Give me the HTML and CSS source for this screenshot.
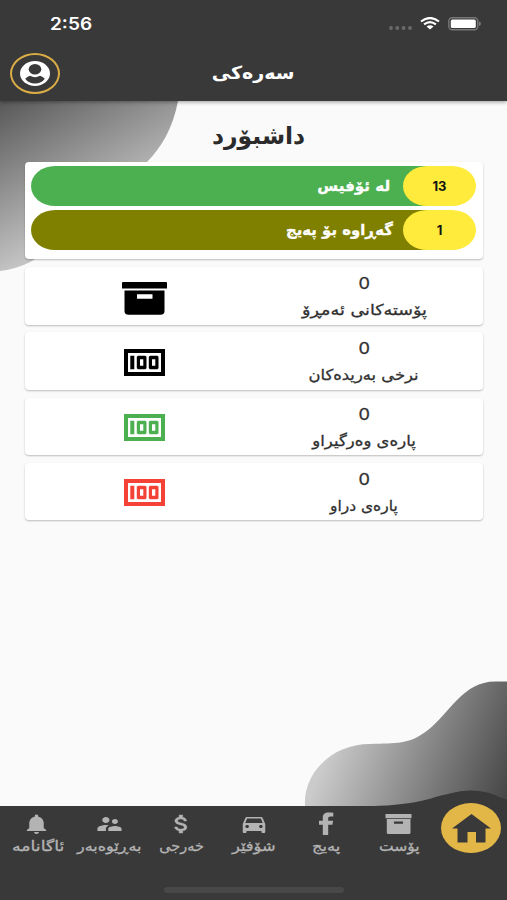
FILE: index.html
```html
<!DOCTYPE html>
<html lang="ckb" dir="rtl">
<head>
<meta charset="utf-8">
<title>سەرەکی</title>
<link rel="stylesheet" href="styles.css">
</head>
<body>
<svg width="0" height="0" class="defs">
  <symbol id="money" viewBox="0 0 41 27.400" preserveAspectRatio="none">
    <path fill="currentColor" fill-rule="evenodd" d="M0 0h41v27.400H0zM4 4v19.400h33V4z"/>
    <path fill="currentColor" fill-rule="evenodd" d="M6.300 6.900h4v13.600h-4zM14 6.900h7.300l1.200 1v11.600l-1.200 1H14l-1.200-1V7.900zM16 10.400v6.600h3.300v-6.600zM26 6.900h7.300l1.200 1v11.600l-1.200 1H26l-1.200-1V7.900zM28 10.400v6.600h3.300v-6.600z"/>
  </symbol>
</svg>
<div class="screen">
  <header class="header">
    <div class="status" dir="ltr">
      <span class="time">2:56</span>
      <span class="indicators">
        <svg class="dots" width="23" height="4" viewBox="0 0 23 4"><g fill="#6a6a6a"><circle cx="2" cy="2" r="1.900"/><circle cx="8.300" cy="2" r="1.900"/><circle cx="14.600" cy="2" r="1.900"/><circle cx="21" cy="2" r="1.900"/></g></svg>
        <svg class="wifi" width="20" height="13" viewBox="0 0 20 13"><path d="M1 4.500Q10-2.500 19 4.500M4.100 7.400Q10 2.800 15.900 7.400" fill="none" stroke="#fff" stroke-width="2.200"/><path d="M6.500 9.600Q10 6.800 13.500 9.600L10 12.600z" fill="#fff"/></svg>
        <svg class="battery" width="34" height="14" viewBox="0 0 34 14"><rect x=".8" y=".8" width="29" height="12" rx="3.500" fill="none" stroke="#777" stroke-width="1.400"/><rect x="2.800" y="2.600" width="25" height="8.400" rx="1.600" fill="#fff"/><path d="M31 4.500q2 .5 2 2.300t-2 2.300z" fill="#777"/></svg>
      </span>
    </div>
    <div class="appbar">
      <h1 class="bar-title"><span class="t-main">سەرەکی</span></h1>
      <div class="profile">
        <svg width="30" height="25" viewBox="0 0 30 25"><ellipse cx="15" cy="12.500" rx="15" ry="12.500" fill="#fff"/><ellipse cx="15" cy="8.300" rx="6.300" ry="5.200" fill="#393939"/><path d="M5.200 17.800Q7 15.500 10 14.700Q15 17.600 20 14.700Q23 15.500 24.800 17.800Q21.500 22.600 15 22.600T5.200 17.800z" fill="#393939"/></svg>
      </div>
    </div>
  </header>
  <main class="content">
    <svg class="blob blob-top" width="180" height="172" viewBox="0 0 180 172"><defs><linearGradient id="g1" gradientUnits="userSpaceOnUse" x1="0" y1="0" x2="76" y2="136"><stop offset="0" stop-color="#585858"/><stop offset="1" stop-color="#c6c6c6"/></linearGradient></defs><path fill="url(#g1)" d="M0 0H178C173 27 161 47 147 61C120 91 82 76 70 105C56 139 45 164 0 170z"/></svg>
    <svg class="blob blob-bottom" width="203" height="126" viewBox="0 0 203 126"><defs><linearGradient id="g2" gradientUnits="userSpaceOnUse" x1="30" y1="55" x2="198" y2="122"><stop offset="0" stop-color="#cbcbcb"/><stop offset="1" stop-color="#484848"/></linearGradient></defs><path fill="url(#g2)" d="M1 126C-1 94 27 64 66 64C92 63 105 65 124 50C146 33 159 1 192 1.500H203V126z"/></svg>
    <h2 class="page-title"><span class="t-dash">داشبۆرد</span></h2>
    <section class="card summary">
      <div class="pill green"><span class="badge">13</span><span class="pill-label t-office">لە ئۆفیس</span></div>
      <div class="pill olive"><span class="badge">1</span><span class="pill-label t-return">گەڕاوە بۆ پەیج</span></div>
    </section>
    <section class="card row">
      <div class="info"><b>0</b><span class="t-today">پۆستەکانی ئەمڕۆ</span></div>
      <div class="pic box"><svg width="45" height="33" viewBox="0 0 45 33"><path fill-rule="evenodd" d="M1 0h43q1 0 1 1v5.500H0V1q0-1 1-1zM2.500 8.500h40V29q0 3.800-4 3.800h-32q-4 0-4-3.800zM15 12.300v4.500h15.500v-4.500z"/></svg></div>
    </section>
    <section class="card row">
      <div class="info"><b>0</b><span class="t-price">نرخی بەریدەکان</span></div>
      <div class="pic"><svg width="41" height="27"><use href="#money"/></svg></div>
    </section>
    <section class="card row">
      <div class="info"><b>0</b><span class="t-received">پارەی وەرگیراو</span></div>
      <div class="pic money-in"><svg width="41" height="27"><use href="#money"/></svg></div>
    </section>
    <section class="card row">
      <div class="info"><b>0</b><span class="t-paid">پارەی دراو</span></div>
      <div class="pic money-out"><svg width="41" height="27"><use href="#money"/></svg></div>
    </section>
  </main>
  <footer class="footer">
    <svg class="bump" width="147" height="18" viewBox="0 0 147 18"><path fill="#393939" d="M0 18V17.300C58 17 68 9 90 4.500C104 .5 118 .5 129 4C137 6.500 141 9 147 10.500V18z"/></svg>
    <nav class="nav">
      <a class="home"><svg width="39" height="29" viewBox="0 0 39 29"><path fill="#393939" d="M19.500 0L39 14.500H33.500V28.500H24V18H15.500V28.500H5.500V14.500H0z"/></svg></a>
      <a class="item"><svg width="29" height="24" viewBox="0 0 29 24"><path fill="currentColor" fill-rule="evenodd" d="M1.500 2h26v4.300H1.500zM2.800 7h23.700V20.500q0 1.500-1.500 1.500H4.300q-1.500 0-1.500-1.500zM10 9.500v2.300h9V9.500z"/></svg><span class="t-post">پۆست</span></a>
      <a class="item"><svg width="29" height="24" viewBox="0 0 29 24"><path fill="currentColor" d="M10.800 23V12.700H7V8.700h3.800V5.500C10.800 2 13 .5 16.300 .5c1.800 0 3.600.1 5 .3v3.600H18.500c-1.700 0-2.300.8-2.300 2v2.300h4.900l-.7 4h-4.200V23z"/></svg><span class="t-page">پەیج</span></a>
      <a class="item"><svg width="30" height="24" viewBox="0 0 24 24" preserveAspectRatio="none"><path fill="currentColor" d="M18.920 6.010C18.720 5.420 18.160 5 17.500 5h-11c-.66 0-1.210.42-1.420 1.010L3 12v8c0 .55.45 1 1 1h1c.55 0 1-.45 1-1v-1h12v1c0 .55.450 1 1 1h1c.55 0 1-.45 1-1v-8l-2.080-5.990zM6.500 16c-.83 0-1.500-.67-1.500-1.500S5.670 13 6.500 13s1.500.67 1.500 1.500S7.330 16 6.500 16zm11 0c-.83 0-1.500-.67-1.500-1.500s.67-1.500 1.500-1.500 1.500.67 1.500 1.500-.67 1.500-1.500 1.500zM5 11l1.500-4.500h11L19 11H5z"/></svg><span class="t-driver">شۆفێر</span></a>
      <a class="item"><svg width="29" height="24" viewBox="0 0 24 24" preserveAspectRatio="none"><path fill="currentColor" stroke="currentColor" stroke-width=".4" d="M11.800 10.900c-2.270-.59-3-1.200-3-2.150 0-1.090 1.010-1.850 2.700-1.850 1.780 0 2.440.85 2.500 2.100h2.210c-.07-1.720-1.120-3.300-3.210-3.810V3h-3v2.160c-1.940.42-3.500 1.680-3.500 3.610 0 2.310 1.910 3.460 4.700 4.130 2.500.6 3 1.480 3 2.410 0 .69-.49 1.790-2.700 1.790-2.060 0-2.870-.92-2.980-2.100h-2.200c.12 2.190 1.760 3.420 3.680 3.830V21h3v-2.150c1.950-.37 3.500-1.500 3.500-3.550 0-2.840-2.430-3.810-4.700-4.400z"/></svg><span class="t-expense">خەرجی</span></a>
      <a class="item"><svg width="29" height="24" viewBox="0 0 24 24" preserveAspectRatio="none"><path fill="currentColor" d="M16.500 12c1.380 0 2.490-1.120 2.490-2.500S17.880 7 16.500 7C15.120 7 14 8.120 14 9.500s1.120 2.500 2.500 2.500zM9 11c1.660 0 2.990-1.340 2.990-3S10.660 5 9 5C7.340 5 6 6.340 6 8s1.340 3 3 3zm7.500 3c-1.830 0-5.500.92-5.500 2.750V19h11v-2.250c0-1.830-3.670-2.750-5.500-2.750zM9 13c-2.330 0-7 1.170-7 3.500V19h7v-2.250c0-.85.33-2.340 2.370-3.470C10.500 13.100 9.660 13 9 13z"/></svg><span class="t-manager">بەڕێوەبەر</span></a>
      <a class="item"><svg width="29" height="24" viewBox="0 0 24 24" preserveAspectRatio="none"><path fill="currentColor" d="M12 22c1.100 0 2-.9 2-2h-4c0 1.100.89 2 2 2zm6-6v-5c0-3.070-1.640-5.640-4.500-6.320V4c0-.83-.67-1.500-1.500-1.500s-1.500.67-1.500 1.500v.68C7.630 5.360 6 7.920 6 11v5l-2 2v1h16v-1l-2-2z"/></svg><span class="t-notice">ئاگانامە</span></a>
    </nav>
    <div class="home-indicator"></div>
  </footer>
</div>
</body>
</html>
```

FILE: styles.css
```css
* { box-sizing: border-box; }
body { margin: 0; font-family: "DejaVu Sans", sans-serif; }
.defs { position: absolute; }
.screen { position: relative; width: 507px; height: 900px; display: flex; flex-direction: column; background: #fafafa; overflow: hidden; }
span { display: inline-block; white-space: nowrap; }

.header { height: 101px; background: #393939; color: #fff; box-shadow: 0 1px 4px rgba(0,0,0,.4); position: relative; z-index: 2; }
.status { height: 46px; padding: 1px 25px 0 50px; display: flex; justify-content: space-between; align-items: center; }
.time { font: 600 17px/20px Inter, sans-serif; transform: scaleX(1.12); transform-origin: left; }
.indicators { display: flex; align-items: center; gap: 8px; }
.dots { margin-top: 8px; }
.appbar { height: 54px; display: grid; grid-template-columns: 1fr 200px 1fr; align-items: center; }
.bar-title { grid-column: 2; margin: 0; text-align: center; font-size: 18px; line-height: 24px; }
.profile { justify-self: end; margin-left: 10px; width: 50px; height: 41px; border: 2px solid #d9ac45; border-radius: 50%; display: flex; align-items: center; justify-content: center; }

.content { position: relative; height: 705px; padding: 17px 24px 0 25px; }
.blob { position: absolute; }
.blob-top { left: 0; top: 0; }
.blob-bottom { right: 0; bottom: 0; }
.page-title { position: relative; margin: 0 0 9px; padding-left: 10px; height: 35px; text-align: center; font-size: 24px; line-height: 37px; color: #2b2b2b; }
.card { position: relative; background: #fff; border-radius: 4px; box-shadow: 0 1px 2px rgba(0,0,0,.25); }
.summary { height: 97px; padding: 4px 7px 0 6px; display: flex; flex-direction: column; gap: 4px; margin-bottom: 8px; }
.pill { height: 40px; border-radius: 24px / 20px; display: flex; align-items: center; gap: 11px; color: #fff; font-weight: bold; font-size: 15px; }
.green { background: linear-gradient(to left, transparent 24px, #4caf50 24px); }
.olive { background: linear-gradient(to left, transparent 24px, #808000 24px); }
.badge { width: 73px; height: 40px; border-radius: 24px / 20px; background: #ffeb3b; color: #111; text-align: center; font: 700 13px/40px Inter, sans-serif; }
.pill-label { transform-origin: right; -webkit-text-stroke: .3px currentColor; }
.row { height: 57.500px; margin-bottom: 7.800px; display: grid; grid-template-columns: 238px 1fr; }
.info { display: flex; flex-direction: column; align-items: center; padding-top: 5px; color: #303030; font-size: 15px; line-height: 30px; }
.info span { -webkit-text-stroke: .3px currentColor; }
.info b { font: 400 16.500px/23px Inter, sans-serif; transform: scaleX(1.1); -webkit-text-stroke: .3px currentColor; }
.pic { display: flex; align-items: center; justify-content: center; padding: 2px 0 0 0; padding-left: 19px; }
.box { padding-top: 5px; }
.money-in { color: #4caf50; }
.money-out { color: #f44336; }

.footer { position: relative; height: 94px; background: #393939; }
.bump { position: absolute; right: 0; top: -17px; }
.nav { position: relative; height: 81px; display: grid; grid-template-columns: 72px repeat(6, 72.400px); }
.home { width: 60px; height: 50px; margin: -3px 6px 0 0; border-radius: 50%; background: #e2b747; display: flex; align-items: center; justify-content: center; }
.item { display: flex; flex-direction: column; align-items: center; color: #b3b3b3; font-size: 14px; line-height: 21px; padding-top: 6px; }
.item span { -webkit-text-stroke: .3px currentColor; }
.home-indicator { width: 180px; height: 6px; margin: 0 auto; border-radius: 3px; background: #484848; }

.t-main { transform: scaleX(1.06); }
.t-dash { transform: scaleX(.98); }
.t-office { transform: translateX(-2px) scaleX(1.01); }
.t-return { transform: translateX(1px) scaleX(.99); }
.t-today { transform: scaleX(1.17); }
.t-price { transform: scaleX(1.09); }
.t-received { transform: scaleX(1.1); }
.t-paid { transform: scaleX(1.03); }
.t-post { transform: scaleX(1.11); }
.t-page { transform: scaleX(1.17); }
.t-driver { transform: scaleX(1.16); }
.t-expense { transform: scaleX(1.03); }
.t-manager { transform: scaleX(1.14); }
.t-notice { transform: translateX(1px) scaleX(1.24); }
```
